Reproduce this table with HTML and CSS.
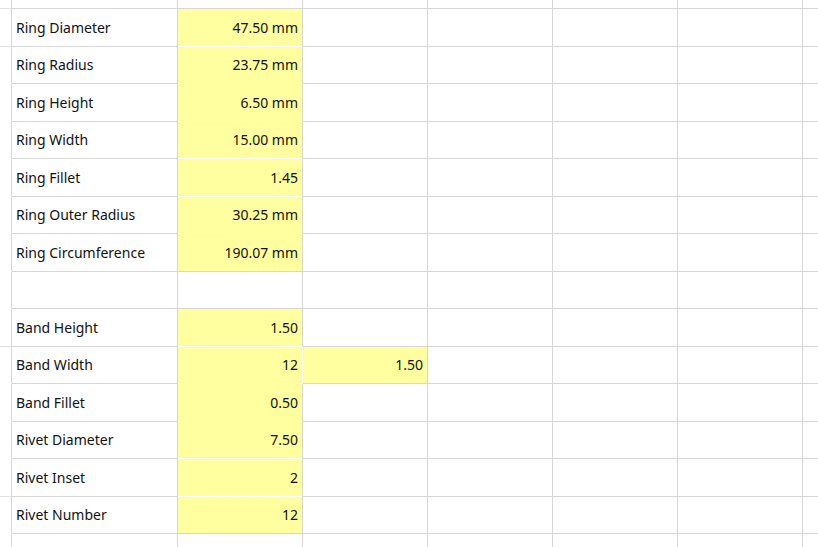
FILE: index.html
```html
<!DOCTYPE html>
<html>
<head>
<meta charset="utf-8">
<link rel="stylesheet" href="styles.css">
</head>
<body>
<div class="sheet">
  <!-- row 0 (partial) -->
  <div class="c s sb"></div><div class="c"></div><div class="c"></div><div class="c"></div><div class="c"></div><div class="c"></div><div class="c"></div><div class="c e"></div>
  <!-- row 1 -->
  <div class="c s sb"></div><div class="c l">Ring Diameter</div><div class="c y yw r">47.50 mm</div><div class="c"></div><div class="c"></div><div class="c"></div><div class="c"></div><div class="c e"></div>
  <div class="c s"></div><div class="c l">Ring Radius</div><div class="c y yw r">23.75 mm</div><div class="c"></div><div class="c"></div><div class="c"></div><div class="c"></div><div class="c e"></div>
  <div class="c s"></div><div class="c l">Ring Height</div><div class="c y yw r">6.50 mm</div><div class="c"></div><div class="c"></div><div class="c"></div><div class="c"></div><div class="c e"></div>
  <div class="c s"></div><div class="c l">Ring Width</div><div class="c y yw r">15.00 mm</div><div class="c"></div><div class="c"></div><div class="c"></div><div class="c"></div><div class="c e"></div>
  <div class="c s"></div><div class="c l">Ring Fillet</div><div class="c y yw r">1.45</div><div class="c"></div><div class="c"></div><div class="c"></div><div class="c"></div><div class="c e"></div>
  <div class="c s"></div><div class="c l">Ring Outer Radius</div><div class="c y yw r">30.25 mm</div><div class="c"></div><div class="c"></div><div class="c"></div><div class="c"></div><div class="c e"></div>
  <div class="c s"></div><div class="c l">Ring Circumference</div><div class="c y r">190.07 mm</div><div class="c"></div><div class="c"></div><div class="c"></div><div class="c"></div><div class="c e"></div>
  <!-- row 8 empty -->
  <div class="c s"></div><div class="c"></div><div class="c"></div><div class="c"></div><div class="c"></div><div class="c"></div><div class="c"></div><div class="c e"></div>
  <!-- row 9 -->
  <div class="c s sb"></div><div class="c l">Band Height</div><div class="c y yw r">1.50</div><div class="c"></div><div class="c"></div><div class="c"></div><div class="c"></div><div class="c e"></div>
  <div class="c s"></div><div class="c l">Band Width</div><div class="c y yw yr r">12</div><div class="c y r">1.50</div><div class="c"></div><div class="c"></div><div class="c"></div><div class="c e"></div>
  <div class="c s"></div><div class="c l">Band Fillet</div><div class="c y yw r">0.50</div><div class="c"></div><div class="c"></div><div class="c"></div><div class="c"></div><div class="c e"></div>
  <div class="c s"></div><div class="c l">Rivet Diameter</div><div class="c y yw r">7.50</div><div class="c"></div><div class="c"></div><div class="c"></div><div class="c"></div><div class="c e"></div>
  <div class="c s sb"></div><div class="c l">Rivet Inset</div><div class="c y yw r">2</div><div class="c"></div><div class="c"></div><div class="c"></div><div class="c"></div><div class="c e"></div>
  <div class="c s"></div><div class="c l">Rivet Number</div><div class="c y r">12</div><div class="c"></div><div class="c"></div><div class="c"></div><div class="c"></div><div class="c e"></div>
  <!-- row 15 partial -->
  <div class="c s"></div><div class="c z"></div><div class="c z"></div><div class="c z"></div><div class="c z"></div><div class="c z"></div><div class="c z"></div><div class="c e z"></div>
</div>
</body>
</html>
```

FILE: styles.css
```css
html, body {
  margin: 0;
  padding: 0;
  background: #ffffff;
  overflow: hidden;
}

.sheet {
  display: grid;
  width: 818px;
  height: 547px;
  grid-template-columns: 12px 166px 125px 125px 125px 125px 125px 1fr;
  grid-template-rows: 9px 38px 37px 38px 37px 38px 37px 38px 37px 38px 37px 38px 37px 38px 37px 1fr;
  font-family: "Noto Sans", "Open Sans", sans-serif;
  font-size: 14px;
  color: #111111;
}

.c {
  box-sizing: border-box;
  border-right: 1px solid #d6d6d6;
  border-bottom: 1px solid #d6d6d6;
  display: flex;
  align-items: center;
  padding: 0 4px 1px 4px;
  white-space: nowrap;
  overflow: hidden;
}

.c.s {
  border-bottom-color: transparent;
  padding: 0;
}

.c.s.sb {
  border-bottom-color: #e0e0e0;
}

.c.e {
  border-right: none;
}

.c.z {
  border-bottom: none;
}

.l {
  justify-content: flex-start;
}

.r {
  justify-content: flex-end;
}

.y {
  background: #ffff9f;
}

.yw {
  border-bottom-color: #ffffff;
}

.yr {
  border-right-color: #ffffff;
}
```
